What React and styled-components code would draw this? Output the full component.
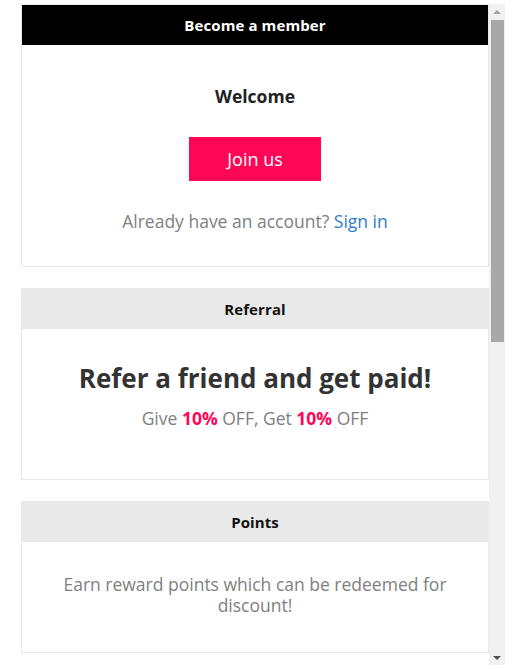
import React from "react";
import styled, { createGlobalStyle } from "styled-components";

const GlobalStyle = createGlobalStyle`
  html, body { margin: 0; padding: 0; background: #fff; }
  body { font-family: "Open Sans", "Liberation Sans", sans-serif; }
  * { box-sizing: border-box; }
`;

const Frame = styled.div`
  margin: 4px 16px 0 21px;
  height: 661px;
  display: flex;
`;

const Viewport = styled.div`
  flex: 1;
  min-width: 0;
  overflow: hidden;
`;

const ScrollBar = styled.div`
  width: 16px;
  flex: none;
  display: flex;
  flex-direction: column;
  background: #f1f1f1;
`;

const ArrowButton = styled.div`
  height: 16px;
  flex: none;
  display: flex;
  align-items: center;
  justify-content: center;
  &::before {
    content: "";
    width: 0;
    height: 0;
    border-left: 4px solid transparent;
    border-right: 4px solid transparent;
    ${(p) =>
      p.$down
        ? "border-top: 4px solid #505050; margin-top: 2px;"
        : "border-bottom: 4px solid #a3a3a3; margin-bottom: 1px;"}
  }
`;

const Track = styled.div`
  flex: 1;
  display: flex;
  flex-direction: column;
`;

const Thumb = styled.div`
  height: 322px;
  margin: 0 1px 0 2px;
  background: #a8a8a8;
`;

const Stack = styled.div`
  display: flex;
  flex-direction: column;
  gap: ${(p) => p.$gap || "22px"};
`;

const Card = styled.section`
  border: 1px solid #e8e8e8;
  background: #fff;
`;

const CardHeader = styled.header`
  height: 40px;
  display: flex;
  align-items: center;
  justify-content: center;
  font-weight: 700;
  font-size: 15px;
  letter-spacing: 0.1px;
  background: ${(p) => (p.$dark ? "#000" : "#e9e9e9")};
  color: ${(p) => (p.$dark ? "#fff" : "#111")};
`;

const CardBody = styled.div`
  display: flex;
  flex-direction: column;
  align-items: center;
  text-align: center;
  padding: ${(p) => p.$pad || "32px 40px"};
`;

const Welcome = styled.h3`
  margin: 0;
  font-size: 17.5px;
  line-height: 24px;
  font-weight: 700;
  color: #222;
`;

const JoinButton = styled.button`
  margin-top: 29px;
  width: 132px;
  height: 44px;
  border: none;
  background: #ff0657;
  color: #fff;
  font-family: inherit;
  font-size: 18px;
  cursor: pointer;
`;

const Muted = styled.p`
  margin: ${(p) => p.$m || "0"};
  font-size: 17.5px;
  line-height: ${(p) => p.$lh || "24px"};
  color: #808080;
`;

const Link = styled.a`
  color: #2f7bcc;
  text-decoration: none;
`;

const BigTitle = styled.h2`
  margin: 0;
  font-size: 26px;
  line-height: 30px;
  font-weight: 700;
  color: #333;
`;

const Accent = styled.strong`
  color: #ff0657;
  font-weight: 700;
`;

export default function App() {
  return (
    <>
      <GlobalStyle />
      <Frame>
        <Viewport>
          <Stack $gap="21px">
            <Card>
              <CardHeader $dark>Become a member</CardHeader>
              <CardBody $pad="39px 20px 33px">
                <Welcome>Welcome</Welcome>
                <JoinButton>Join us</JoinButton>
                <Muted $m="28px 0 0">
                  Already have an account? <Link href="#">Sign in</Link>
                </Muted>
              </CardBody>
            </Card>
            <Card>
              <CardHeader>Referral</CardHeader>
              <CardBody $pad="34px 20px 49px">
                <BigTitle>Refer a friend and get paid!</BigTitle>
                <Muted $m="13px 0 0">
                  Give <Accent>10%</Accent> OFF, Get <Accent>10%</Accent> OFF
                </Muted>
              </CardBody>
            </Card>
            <Card>
              <CardHeader>Points</CardHeader>
              <CardBody $pad="32px 40px 36px">
                <Muted $lh="21px">Earn reward points which can be redeemed for discount!</Muted>
              </CardBody>
            </Card>
          </Stack>
        </Viewport>
        <ScrollBar aria-hidden="true">
          <ArrowButton />
          <Track>
            <Thumb />
          </Track>
          <ArrowButton $down />
        </ScrollBar>
      </Frame>
    </>
  );
}
